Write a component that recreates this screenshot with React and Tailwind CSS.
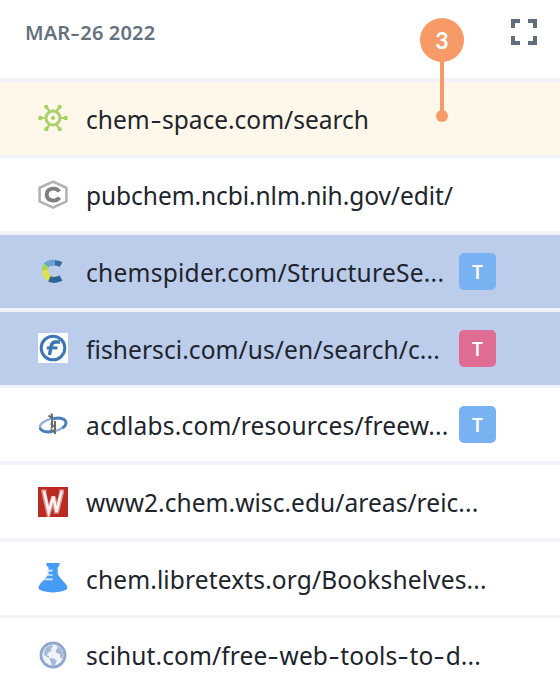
import React from 'react';

const ChemSpaceIcon = () => (
    <svg viewBox="0 0 30 30" className="w-[30px] h-[30px]" fill="none" stroke="#a9d26a" strokeWidth="2.2">
        <path d="M3 15h5M22 15h5M8.500 4l3.500 5M21.500 4l-3.500 5M8.500 26l3.500-5M21.500 26l-3.500-5" />
        <circle cx="15" cy="15" r="7" strokeWidth="3" />
        <g fill="#a4d160" stroke="none">
            <circle cx="2.3" cy="15" r="2.2" />
            <circle cx="27.7" cy="15" r="2.2" />
            <circle cx="8.3" cy="3.8" r="2.1" />
            <circle cx="21.7" cy="3.8" r="2.1" />
            <circle cx="8.3" cy="26.2" r="2.1" />
            <circle cx="21.7" cy="26.2" r="2.1" />
            <circle cx="15" cy="15" r="2.1" />
        </g>
    </svg>
);

const PubChemIcon = () => (
    <svg viewBox="0 0 30 30" className="w-[30px] h-[30px]" fill="none">
        <path d="M15 1.600L28.400 7.800v13.600L15 27.600 1.600 21.400V7.800z" stroke="#b0b2b4" strokeWidth="2.6" strokeLinejoin="round" />
        <path d="M21.300 11.600c-1.200-2-3.200-3-5.900-3-4.200 0-6.700 2.400-6.700 6s2.500 6 6.700 6c2.800 0 4.800-1 6-3" stroke="#7c7e80" strokeWidth="3.900" />
    </svg>
);

const ChemSpiderIcon = () => (
    <svg viewBox="0 0 30 30" className="w-[30px] h-[30px]" fill="none" strokeWidth="6">
        <path d="M8 8.600C10.200 6 13 5.400 17 6" stroke="#6ba2cf" />
        <path d="M17 6c2.400-.1 4 .4 6 1.600" stroke="#336da3" strokeWidth="5.4" />
        <path d="M8.300 8.200C6.800 10.400 6.500 12 6.800 14" stroke="#a4d35c" />
        <path d="M6.800 13c.3 3.800 1.700 6.500 5 8.600" stroke="#dce052" strokeWidth="6.4" />
        <path d="M11.300 22c4 1.500 7.800 1.100 11.700-.9" stroke="#2e6599" strokeWidth="6" />
    </svg>
);

const FisherIcon = () => (
    <svg viewBox="0 0 30 30" className="w-[30px] h-[30px]" fill="none">
        <path d="M0 0h30v30H0z" fill="#fdfdfe" />
        <circle cx="15" cy="15" r="11.8" stroke="#3c77b4" strokeWidth="3" />
        <path d="M22 9h-4.400c-3 0-4 1.200-4.500 4.200l-1.600 8.800" stroke="#3c77b4" strokeWidth="3.4" />
        <path d="M8.800 14.900h10.600" stroke="#3c77b4" strokeWidth="3" />
    </svg>
);

const AcdLabsIcon = () => (
    <svg viewBox="0 0 30 30" className="w-[30px] h-[30px]" fill="none">
        <g transform="rotate(-12 15 15)">
            <ellipse cx="15" cy="15" rx="13.400" ry="6.400" stroke="#8cafd9" strokeWidth="2.2" />
            <path d="M1.800 15c0 3.500 5 6.200 11 6.200M17 8.800c7 0 11.200 2.600 11.200 6.200 0 2-1.800 3.800-4.600 5" stroke="#4a7fbd" strokeWidth="2.900" />
        </g>
        <path d="M13.500 3.500l1 5.500-1 5.500 3.600 2.500-.6 3 .7 4M10.500 5.500l4 3M14.300 9l-.6 9.500M17 11v9M12.500 19.500l4.500 3" stroke="#686b70" strokeWidth="2" />
    </svg>
);

const WiscIcon = () => (
    <svg viewBox="0 0 30 30" className="w-[30px] h-[30px]" fill="none">
        <path d="M0 0h30v30H0z" fill="#ba2a21" />
        <path d="M5.500 3.800l5 22.400 5-16.500 3 16.500 5.500-22.400" stroke="#dc8d8e" strokeWidth="4.800" />
        <path d="M6 4l4.700 21 4.600-15.500 3.200 15.500L23.600 4" stroke="#fff4f4" strokeWidth="2.6" />
        <path d="M3.400 3.300h5.200M21.400 3.300h4.400" stroke="#e3a4a6" strokeWidth="1.8" />
    </svg>
);

const LibreTextsIcon = () => (
    <svg viewBox="0 0 30 30" className="w-[30px] h-[30px]" fill="none">
        <path d="M8.500 0h13v2.400l-1.800 2.200V10.500c1.200 4 6.300 7.800 9 11.900 1.200 2 .8 3.600-1.100 4.600C23 28.800 19 29.400 15 29.400S6.600 28.800 2.200 27C.4 26 0 24.400 1.200 22.400 3.900 18.300 9.300 14.500 10.500 10.500V4.600L8.500 2.400z" fill="#459bf5" />
        <path d="M9 7.600h5.700M8 12h6.700M6.500 16.400h8.200" stroke="#d9ebfd" strokeWidth="1.7" />
    </svg>
);

const GlobeIcon = () => (
    <svg viewBox="0 0 30 30" className="w-[30px] h-[30px]" fill="none">
        <circle cx="15" cy="15" r="12" fill="#f0f4fa" stroke="#8fa7ce" strokeWidth="2.8" />
        <g fill="#a5b8d8">
            <path d="M6.500 10l3-3.500 4.500-1.500 1 1.600-2.500 2.200 1.200 1.700-3.200 2L8.700 15l2.600 1.500-1 1.400-4.300-3z" />
            <path d="M18 5.500l4.500 2.500 3 5.500-1.300 5-2-1-.5-3.500-3.500-1.300-.2-3 1.900-1.700z" />
            <path d="M11.500 18l5 .8 2.200 2.200-1.700 4-2.800.8-1.400-3.800z" />
        </g>
    </svg>
);

const sites = [
    { url: 'chem-space.com/search', icon: <ChemSpaceIcon />, row: 'bg-[#fff8ea]', track: 'tracking-[0px]' },
    { url: 'pubchem.ncbi.nlm.nih.gov/edit/', icon: <PubChemIcon />, row: 'bg-white', track: 'tracking-[-0.06px]' },
    { url: 'chemspider.com/StructureSe...', icon: <ChemSpiderIcon />, row: 'bg-[#bccceb]', track: 'tracking-[0.26px]', tag: 'bg-[#79b2f2]' },
    { url: 'fishersci.com/us/en/search/c...', icon: <FisherIcon />, row: 'bg-[#bccceb]', track: 'tracking-[0.09px]', tag: 'bg-[#df6c92]' },
    { url: 'acdlabs.com/resources/freew...', icon: <AcdLabsIcon />, row: 'bg-white', track: 'tracking-[0.18px]', tag: 'bg-[#79b2f2]' },
    { url: 'www2.chem.wisc.edu/areas/reic...', icon: <WiscIcon />, row: 'bg-white', track: 'tracking-[0.06px]' },
    { url: 'chem.libretexts.org/Bookshelves...', icon: <LibreTextsIcon />, row: 'bg-white', track: 'tracking-[0.14px]' },
    { url: 'scihut.com/free-web-tools-to-d...', icon: <GlobeIcon />, row: 'bg-white', track: 'tracking-[0.1px]' },
];

// Hyphens are set wider than the font's own
const Wide = ({ text }) => text.split('-').map((part, i) => (
    <React.Fragment key={i}>
        {i > 0 && <span className="inline-block w-[0.5em] text-center scale-x-140">-</span>}
        {part}
    </React.Fragment>
));

const SiteRow = ({ site }) => (
    <div className="h-[76.7px] shrink-0 flex flex-col">
        <div className="h-[3.6px] shrink-0 bg-[#f1f3f8]"></div>
        <div className={`flex-1 flex items-center pl-[38px] ${site.row}`}>
            {site.icon}
            <div className={`w-[392px] ml-[18px] pt-[3px] whitespace-nowrap text-[24.5px] leading-8 text-[#20242c] ${site.track}`}>
                <Wide text={site.url} />
            </div>
            {site.tag && (
                <div className={`-ml-[19px] w-[37px] h-[37px] pt-0.5 rounded-[5px] flex items-center justify-center text-white font-bold text-[18px] font-['Lato',sans-serif] ${site.tag}`}>
                    T
                </div>
            )}
        </div>
    </div>
);

const App = () => {
    return (
        <div className="relative w-[560px] h-[680px] overflow-hidden bg-white flex flex-col font-['Noto_Sans',sans-serif]">
            {/* Header */}
            <header className="h-[78px] shrink-0 flex items-start justify-between pl-[25px] pr-[23px] pt-[19px]">
                <h1 className="text-[20px] leading-7 font-semibold tracking-[0.15px] text-[#64727f]">
                    <Wide text="MAR-26 2022" />
                </h1>
                <svg viewBox="0 0 26 26" className="w-[26px] h-[26px]" fill="none" stroke="#5e6e7d" strokeWidth="4">
                    <path d="M9 2H2v7M17 2h7v7M9 24H2v-7M17 24h7v-7" />
                </svg>
            </header>

            {/* Visited sites */}
            {sites.map(site => <SiteRow key={site.url} site={site} />)}

            {/* Step marker */}
            <div className="absolute left-[420px] top-[18px] w-[44px] flex flex-col items-center">
                <div className="w-[44px] h-[44px] rounded-full bg-[#f69b68] flex items-center justify-center text-white font-bold text-[23px] font-['Lato',sans-serif]">3</div>
                <div className="w-[4px] h-[50px] -mt-px bg-[#f69b68]"></div>
                <div className="w-[12px] h-[12px] -mt-px rounded-full bg-[#f69b68]"></div>
            </div>
        </div>
    );
};

export default App;
